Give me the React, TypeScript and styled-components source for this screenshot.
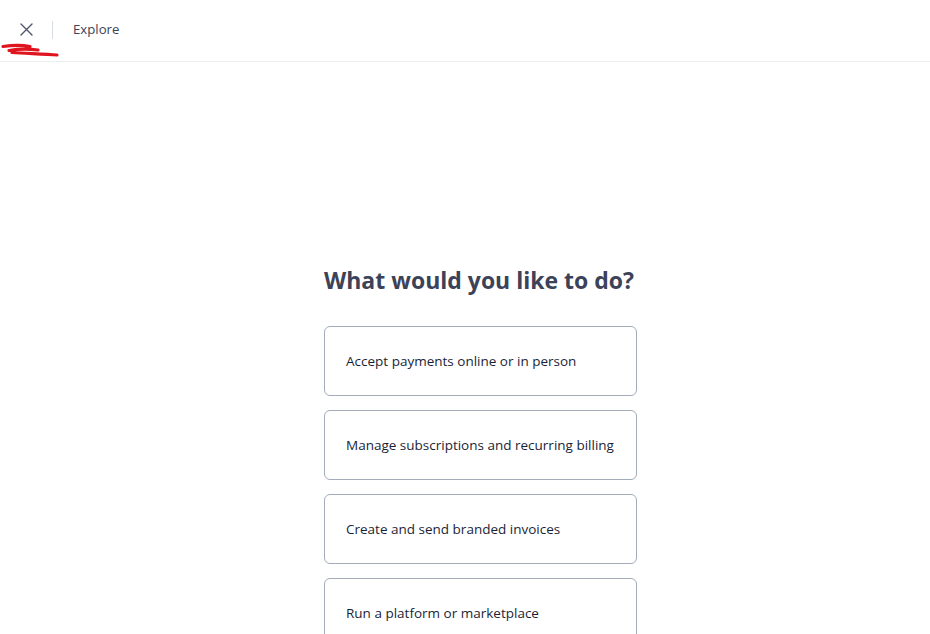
import React from "react";
import styled, { createGlobalStyle } from "styled-components";

const Global = createGlobalStyle`
  html, body { margin: 0; padding: 0; background: #ffffff; }
  body { font-family: "Segoe UI", "Open Sans", "Noto Sans", sans-serif; -webkit-font-smoothing: antialiased; }
  * { box-sizing: border-box; }
`;

const Page = styled.div`
  position: relative;
  width: 100%;
  min-height: 634px;
  overflow: hidden;
`;

const Header = styled.header`
  height: 62px;
  display: flex;
  align-items: center;
  padding: 0 0 2px 18px;
  border-bottom: 1px solid #ebeef1;
`;

const CloseButton = styled.button`
  width: 16px;
  height: 16px;
  padding: 0;
  border: 0;
  background: none;
  display: flex;
  align-items: center;
  justify-content: center;
  color: #4f566b;
  cursor: pointer;
`;

const Divider = styled.div`
  width: 1px;
  height: 18px;
  background: #d8dde3;
  margin: 0 20px 0 18px;
`;

const HeaderTitle = styled.span`
  font-size: 13.2px;
  color: #3c4257;
  margin-top: -1px;
`;

const Scribble = styled.svg`
  position: absolute;
  left: 0;
  top: 40px;
  pointer-events: none;
`;

const Main = styled.main`
  display: flex;
  justify-content: center;
  padding: 204px 0 0 31px;
`;

const Column = styled.div`
  width: 313px;
  display: flex;
  flex-direction: column;
`;

const Title = styled.h1`
  margin: 0 0 32px 0;
  font-size: 23px;
  font-weight: 700;
  color: #3c4257;
  line-height: 28px;
  white-space: nowrap;
`;

const Options = styled.div`
  display: flex;
  flex-direction: column;
  gap: 14px;
`;

const Option = styled.button`
  height: 70px;
  width: 100%;
  text-align: left;
  padding: 0 21px;
  border: 1px solid #a3acb9;
  border-radius: 6px;
  background: #ffffff;
  font-family: inherit;
  font-size: 13.5px;
  color: #1a1f36;
  cursor: pointer;
  display: flex;
  align-items: center;
  white-space: nowrap;
`;

const options = [
  "Accept payments online or in person",
  "Manage subscriptions and recurring billing",
  "Create and send branded invoices",
  "Run a platform or marketplace",
];

export default function App() {
  return (
    <Page>
      <Global />
      <Header>
        <CloseButton aria-label="Close">
          <svg width="13" height="13" viewBox="0 0 13 13" fill="none">
            <path d="M1 1L12 12M12 1L1 12" stroke="currentColor" strokeWidth="1.4" strokeLinecap="round" />
          </svg>
        </CloseButton>
        <Divider />
        <HeaderTitle>Explore</HeaderTitle>
      </Header>
      <Scribble width="64" height="20" viewBox="0 0 64 20">
        <path d="M3 6.5C10 5.5 22 5 30 6.5M9 10.5C18 9 30 9 38 10M12 12.5C28 13.5 46 14 57 15" stroke="#e0141e" strokeWidth="3.2" strokeLinecap="round" fill="none" />
      </Scribble>
      <Main>
        <Column>
          <Title>What would you like to do?</Title>
          <Options>
            {options.map((o) => (
              <Option key={o}>{o}</Option>
            ))}
          </Options>
        </Column>
      </Main>
    </Page>
  );
}
